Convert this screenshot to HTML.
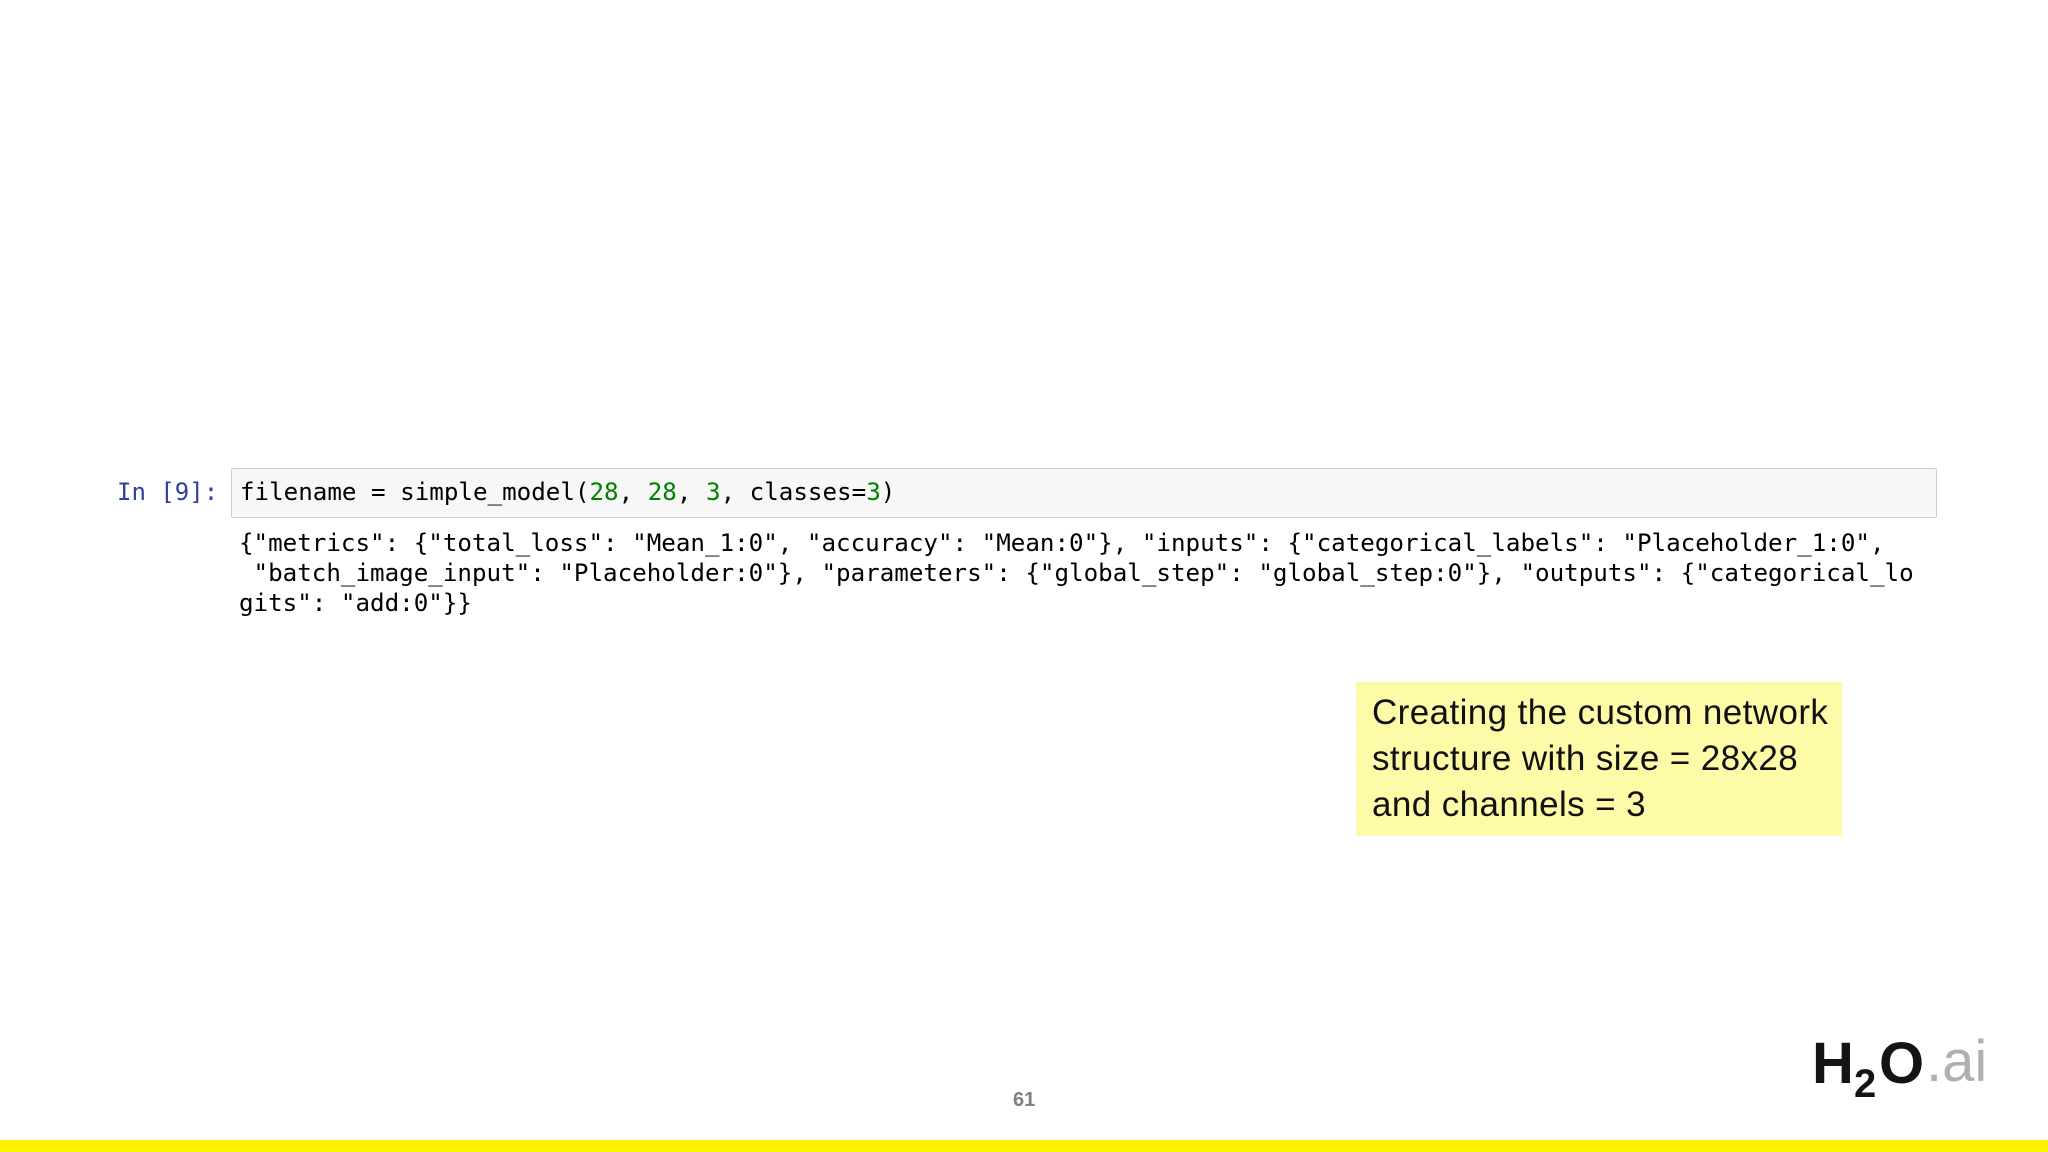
<!DOCTYPE html>
<html><head><meta charset="utf-8"><style>
html,body{margin:0;padding:0}
body{width:2048px;height:1152px;background:#fff;position:relative;overflow:hidden;font-family:"Liberation Sans",sans-serif}
.mono{font-family:"DejaVu Sans Mono","Liberation Mono",monospace;font-size:24.2px;white-space:pre;position:absolute;color:#000}
.prompt{position:absolute;left:117px;top:478px;color:#303f9f;font-family:"DejaVu Sans Mono",monospace;font-size:24px;white-space:pre}
.inbox{position:absolute;left:231px;top:468px;width:1706px;height:50px;background:#f7f7f7;border:1px solid #cfcfcf;border-radius:2px;box-sizing:border-box}
.g{color:#008000}
.note{position:absolute;left:1356px;top:682px;width:486px;height:154px;background:#fdfaa8}
.note div{position:absolute;left:16px;top:8px;font-size:35px;line-height:46px;color:#111;white-space:nowrap;letter-spacing:0.4px}
.bar{position:absolute;left:0;top:1140px;width:2048px;height:12px;background:#fff200}
.pg{position:absolute;left:1013px;top:1089px;font-size:20px;font-weight:bold;color:#808080}
.logo{position:absolute;left:1812px;top:1024px;height:80px}
</style></head><body>
<div class="prompt">In [9]:</div>
<div class="inbox"></div>
<div class="mono" style="left:240px;top:478px">filename = simple_model(<span class="g">28</span>, <span class="g">28</span>, <span class="g">3</span>, classes=<span class="g">3</span>)</div>
<div class="mono" style="left:239px;top:528px;line-height:30px">{"metrics": {"total_loss": "Mean_1:0", "accuracy": "Mean:0"}, "inputs": {"categorical_labels": "Placeholder_1:0",
 "batch_image_input": "Placeholder:0"}, "parameters": {"global_step": "global_step:0"}, "outputs": {"categorical_lo
gits": "add:0"}}</div>
<div class="note"><div>Creating the custom network<br>structure with size = 28x28<br>and channels = 3</div></div>
<div class="pg">61</div>
<div class="logo">
<span style="position:absolute;left:0;top:0;font-size:58px;font-weight:bold;color:#141414;line-height:80px">H</span>
<span style="position:absolute;left:42px;top:30px;font-size:40px;font-weight:bold;color:#141414;line-height:60px">2</span>
<span style="position:absolute;left:67px;top:0;font-size:58px;font-weight:bold;color:#141414;line-height:80px">O</span>
<span style="position:absolute;left:114px;top:-2px;font-size:58px;color:#b0b0b0;line-height:80px">.ai</span>
</div>
<div class="bar"></div>
</body></html>
